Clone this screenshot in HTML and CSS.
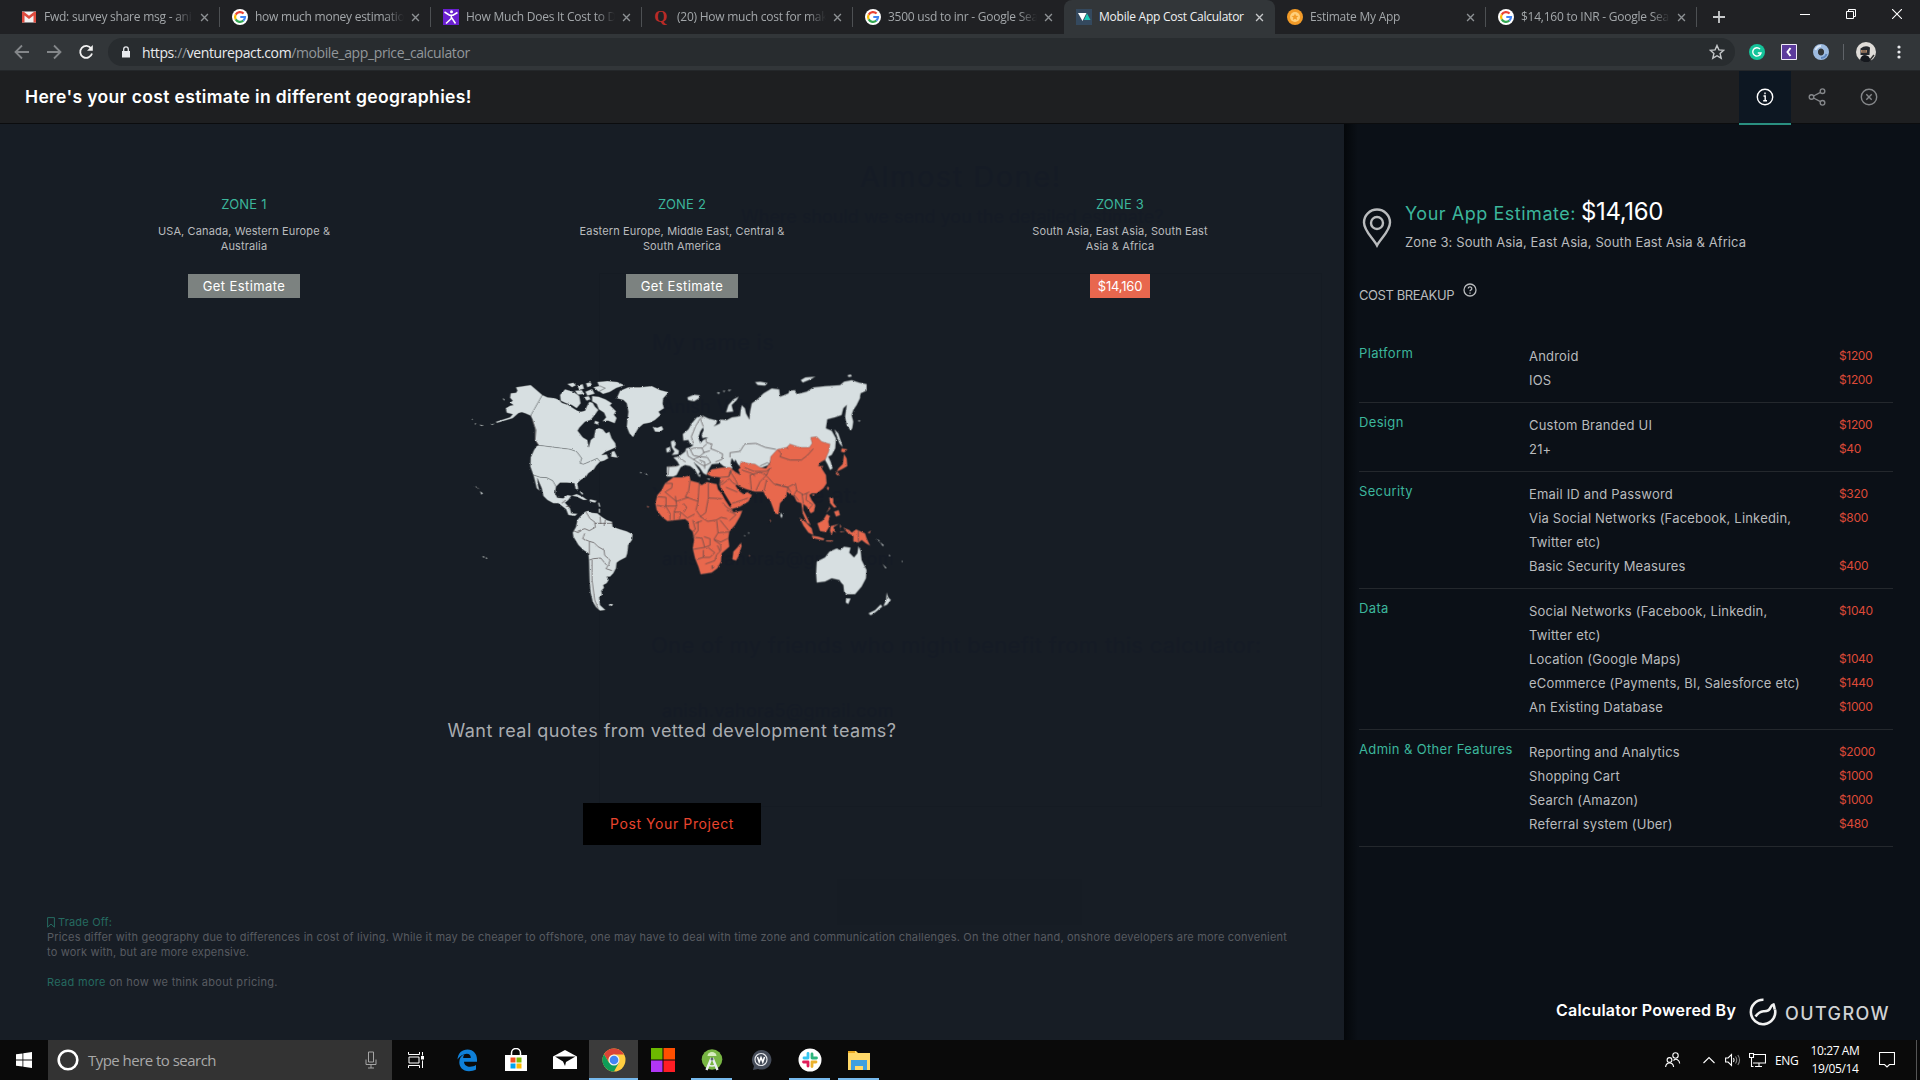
FILE: index.html
```
<!DOCTYPE html>
<html lang="en">
<head>
<meta charset="utf-8">
<title>Mobile App Cost Calculator</title>
<link rel="stylesheet" href="styles.css">
</head>
<body>
<svg class="defs" width="0" height="0">
  <defs>
    <symbol id="google" viewBox="0 0 16 16"><circle cx="8" cy="8" r="8" fill="#fff"/><g fill="none" stroke-width="2.2"><path d="M11.6 4.6A5 5 0 0 0 3.7 5.6" stroke="#ea4335"/><path d="M3.7 5.6a5 5 0 0 0 0 4.8" stroke="#fbbc05"/><path d="M3.7 10.4a5 5 0 0 0 7.6 1.3" stroke="#34a853"/><path d="M11.3 11.7A5 5 0 0 0 13 8H8.3" stroke="#4285f4"/></g></symbol>
    <symbol id="close" viewBox="0 0 10 10"><path d="M1.2 1.2l7.6 7.6M8.8 1.2L1.2 8.8" stroke="currentColor" stroke-width="1.5" fill="none"/></symbol>
  </defs>
</svg>

<div class="tabstrip">
  <div class="tab"><svg class="fav" viewBox="0 0 16 16"><path d="M1 2.5h14v11H1z" fill="#f2f2f2"/><path d="M1 3v10.500h2.500V6.500L8 10l4.500-3.500v7H15V3l-1.500-.6L8 6.700 2.500 2.400z" fill="#dd4b3e"/></svg><span class="tab-title">Fwd: survey share msg - ani</span><svg class="x"><use href="#close"/></svg></div>
  <div class="tab"><svg class="fav"><use href="#google"/></svg><span class="tab-title">how much money estimatio</span><svg class="x"><use href="#close"/></svg></div>
  <div class="tab"><svg class="fav" viewBox="0 0 16 16"><path d="M0 0h16v16H0z" fill="#6a1fd0"/><circle cx="8.500" cy="2.800" r="1.500" fill="#fff"/><path d="M1.500 3l5 3.200h3.500L14.500 3.500M8.300 6v3.500L3 14.500M8.500 8.500l4 6" stroke="#fff" stroke-width="1.500" fill="none"/></svg><span class="tab-title">How Much Does It Cost to D</span><svg class="x"><use href="#close"/></svg></div>
  <div class="tab"><span class="fav quora">Q</span><span class="tab-title">(20) How much cost for mak</span><svg class="x"><use href="#close"/></svg></div>
  <div class="tab last"><svg class="fav"><use href="#google"/></svg><span class="tab-title">3500 usd to inr - Google Sea</span><svg class="x"><use href="#close"/></svg></div>
  <div class="tab active"><svg class="fav" viewBox="0 0 16 16"><path d="M0 0h16v16H0z" fill="#34495e"/><path d="M2 4h8.500L6.500 12z" fill="#fff"/><path d="M11 4.500l3.500 6.500H8z" fill="#1cc8b5"/></svg><span class="tab-title">Mobile App Cost Calculator</span><svg class="x"><use href="#close"/></svg></div>
  <div class="tab"><svg class="fav" viewBox="0 0 16 16"><circle cx="8" cy="8" r="8" fill="#f29b28"/><circle cx="8" cy="8" r="5" fill="#ffd07c"/><path d="M8 4.500l1 2.300 2.500.2-1.900 1.600.6 2.400L8 9.700 5.800 11l.6-2.400L4.500 7 7 6.800z" fill="#f29b28"/></svg><span class="tab-title">Estimate My App</span><svg class="x"><use href="#close"/></svg></div>
  <div class="tab"><svg class="fav"><use href="#google"/></svg><span class="tab-title">$14,160 to INR - Google Sea</span><svg class="x"><use href="#close"/></svg></div>
  <svg class="plus" viewBox="0 0 12 12"><path d="M6 0v12M0 6h12" stroke="#c8cacc" stroke-width="1.800"/></svg>
  <div class="winctl">
    <svg viewBox="0 0 10 10"><path d="M0 5.500h10" stroke="#fff"/></svg>
    <svg viewBox="0 0 10 10"><path d="M.5 2.500h7v7h-7zM2.500 2.500v-2h7v7h-2" stroke="#fff" fill="none"/></svg>
    <svg viewBox="0 0 10 10"><path d="M0 0l10 10M10 0L0 10" stroke="#fff" stroke-width="1.100"/></svg>
  </div>
</div>

<div class="toolbar">
  <div class="nav">
    <svg viewBox="0 0 16 16" stroke="#84878a"><path d="M15 8H2M8 1.500L1.500 8 8 14.500"/></svg>
    <svg viewBox="0 0 16 16" stroke="#84878a"><path d="M1 8h13M8 1.500L14.500 8 8 14.500"/></svg>
    <svg viewBox="0 0 16 16" stroke="#f1f1f1"><path d="M13.200 4.500A6 6 0 1 0 14 9.500"/><path d="M14.800 1v5.800H9z" fill="#f1f1f1" stroke="none"/></svg>
  </div>
  <div class="omnibox">
    <svg class="lock" viewBox="0 0 10 12"><path d="M1 5h8v6.500H1z" fill="#e8eaed"/><path d="M2.700 5V3.200a2.300 2.300 0 0 1 4.600 0V5" fill="none" stroke="#e8eaed" stroke-width="1.300"/></svg>
    <span class="url">https<i>://</i>venturepact.com<i>/mobile_app_price_calculator</i></span>
    <svg class="star" viewBox="0 0 16 16"><path d="M8 1.500l1.900 4.400 4.800.4-3.600 3.200 1.100 4.700L8 11.700l-4.200 2.500 1.100-4.700L1.300 6.300l4.800-.4z" fill="none" stroke="#c4c7c9" stroke-width="1.400"/></svg>
  </div>
  <div class="exts">
    <svg viewBox="0 0 16 16"><circle cx="8" cy="8" r="8" fill="#15c39a"/><path d="M11 5A4.200 4.200 0 1 0 12 9H8.800" fill="none" stroke="#fff" stroke-width="1.400"/></svg>
    <svg viewBox="0 0 16 16"><path d="M.5.5h15v15H.5z" fill="#5c3b9c" stroke="#efeaf7"/><path d="M9.500 4L6.500 8l3 4" fill="none" stroke="#fff" stroke-width="2"/></svg>
    <svg viewBox="0 0 16 16"><circle cx="8" cy="8" r="5.500" fill="none" stroke="#9dbbe0" stroke-width="5"/><path d="M2.500 6a6 6 0 0 1 5.500-4" fill="none" stroke="#dae6f5" stroke-width="2"/><path d="M13.500 10a6 6 0 0 1-5.500 4" fill="none" stroke="#5e86bd" stroke-width="2"/><ellipse cx="8" cy="8" rx="2.600" ry="3.600" fill="#323639"/></svg>
  </div>
  <div class="divider"></div>
  <svg class="avatar" viewBox="0 0 20 20"><circle cx="10" cy="10" r="10" fill="#dfdcd8"/><path d="M4.500 6.500q5-4 9.500-1l-.5 7.500h-9z" fill="#24272c"/><path d="M5 8h6v2.500H5z" fill="#d9a37a"/><path d="M5.500 9h5" stroke="#333"/><path d="M4 18q1-5 5-5t6 6a10 10 0 0 1-11-1z" fill="#15181d"/><path d="M14 18l4-5" stroke="#333" stroke-width="1.500"/></svg>
  <svg class="dots" viewBox="0 0 4 14"><circle cx="2" cy="2" r="1.600"/><circle cx="2" cy="7" r="1.600"/><circle cx="2" cy="12" r="1.600"/></svg>
</div>

<header class="header">
  <h1>Here's your cost estimate in different geographies!</h1>
  <div class="hbtn on"><svg viewBox="0 0 18 18"><circle cx="9" cy="9" r="7.700"/><path d="M9 4.500v1.800M7.500 8H9.200v4.500M7.200 12.800h3.800"/></svg></div>
  <div class="hbtn"><svg viewBox="0 0 18 18"><circle cx="3.500" cy="9" r="2.300"/><circle cx="14.500" cy="3.200" r="2.300"/><circle cx="14.500" cy="14.800" r="2.300"/><path d="M5.500 8l7-3.700M5.500 10l7 3.700"/></svg></div>
  <div class="hbtn"><svg viewBox="0 0 18 18"><circle cx="9" cy="9" r="7.700"/><path d="M6.300 6.300l5.400 5.400M11.700 6.300l-5.400 5.400"/></svg></div>
</header>

<main class="main">
  <section class="left">
    <div class="ghost" aria-hidden="true">
      <span class="g g1">Almost Done!</span>
      <span class="g g2">Where should we send you the detailed estimate?</span>
      <span class="g g3">My name is</span>
      <span class="g g4">Anish Vahora</span>
      <span class="g g5">You can find me at:</span>
      <span class="g g6">anish.vahora5@gmail.com</span>
      <span class="g g7">One of my friends who might benefit from this calculator:</span>
      <span class="g g8">anish.vahora5@gmail.com</span>
      <span class="gbox"></span>
      <span class="gbtn"></span>
    </div>
    <div class="zones">
      <div class="zone"><h2>ZONE 1</h2><p>USA, Canada, Western Europe &amp;<br>Australia</p><span class="btn">Get Estimate</span></div>
      <div class="zone"><h2>ZONE 2</h2><p>Eastern Europe, Middle East, Central &amp;<br>South America</p><span class="btn">Get Estimate</span></div>
      <div class="zone"><h2>ZONE 3</h2><p>South Asia, East Asia, South East<br>Asia &amp; Africa</p><span class="btn price">$14,160</span></div>
    </div>

    <svg class="map" viewBox="-168 0 1608 810">
      <defs><filter id="coast" x="0" y="0" width="100%" height="100%"><feTurbulence type="fractalNoise" baseFrequency="0.16" numOctaves="2" seed="4"/><feDisplacementMap in="SourceGraphic" scale="6" xChannelSelector="R" yChannelSelector="G"/></filter></defs>
      <g filter="url(#coast)">
      <g class="land">
        <path d="M168 82L212 75 247 105 212 167 195 160 185 157 175 160 158 175 110 189 108 185 150 172 158 163 140 158 137 145 150 137 160 135 150 128 158 122 150 113 152 100 168 98 172 92Z"/>
        <path d="M247 105L262 112 285 115 298 120 305 128 325 135 340 145 352 152 362 155 375 152 380 140 388 125 398 128 405 140 415 150 408 160 400 170 392 180 375 185 358 203 353 212 368 232 382 240 386 262 392 240 402 232 406 210 416 204 428 208 438 220 448 215 455 235 466 250 468 262 450 270 436 276 425 285 440 283 445 295 432 302 420 305 412 295 396 302 370 313 360 310 365 295 350 275 330 268 236 256 225 240 226 210 218 180 212 167Z"/>
        <path d="M230 258L236 256 330 268 350 275 365 295 360 310 370 313 396 302 412 295 420 305 408 318 402 328 385 340 378 350 362 360 352 370 355 388 347 388 343 370 320 368 300 368 288 380 278 362 260 353 240 352 220 345 211 320 212 292 222 270Z"/>
        <path d="M220 345L240 352 260 353 278 362 288 380 285 400 292 413 310 415 322 405 334 407 325 420 315 428 330 445 334 460 352 461 345 468 325 465 318 448 295 430 280 430 262 420 250 408 245 385 232 355 234 375 238 392 230 385 224 360Z"/>
        <path d="M335 407L350 402 368 410 382 420 370 420 350 410ZM390 418L410 422 405 428 388 424ZM362 392l8 10-4 2-6-8zM455 275l8-2 10 20-20-3zM414 428l4 0 3 12-4 0zM416 446l4 0 0 12-4 0z"/>
        <path d="M375 455L385 452 395 458 412 460 425 470 440 480 456 485 458 500 480 508 500 514 518 523 516 540 505 555 502 580 498 592 478 602 470 608 468 625 460 640 450 650 440 650 446 660 440 670 430 675 432 684 424 692 426 705 418 712 420 735 436 750 420 752 408 742 398 725 392 700 389 670 388 640 387 605 385 580 370 570 355 555 340 530 338 518 348 500 352 480 360 470Z"/>
        <path d="M480 92L505 82 540 82 575 78 600 90 626 97 610 115 608 130 612 145 596 155 602 165 585 180 570 188 550 192 535 205 526 220 519 232 508 220 500 200 502 180 505 155 500 130 490 120 470 115Z"/>
        <path d="M578 200L592 203 605 198 610 208 600 216 585 215Z"/>
        <path d="M300 105L315 88 340 95 358 108 362 130 350 145 335 135 318 130 302 122ZM322 72l18-4 8 8-12 6zM352 78l16-6 4 14-14 4zM378 70l14-3 4 10-14 5zM345 92l20-2 8 12-20 2zM376 95l20-8 8 14-22 6zM400 82l20-5 16 8-20 10zM412 66l30-3 30 3 22 10-25 8-20 12-20 6-12-8 18-10-18-6zM372 112l14-4 6 10-12 4zM396 108l20 2 20 8 20 12-6 6 18 18-6 10 8 10-6 16-20-8-16 2 10-12-6-14-16-10-6-16-14-8zM405 182l12 4-4 8-10-4z"/>
        <path d="M447 732l12 0-3 6-8 0zM128 115l6 3-2 4zM35 176l4 2-3 2zM44 190l5 1-4 3zM58 194l14 2-8 2zM92 193l12-2-8 4zM46 378l12 9-10-5zM60 394l9 6-5 4zM67 588l8 3-5 2zM77 592l6 3-5 2zM541 335l5 4-5 1zM554 338l10 8-6-2z"/>
        <g transform="translate(540 0)">
        <path d="M128 222L145 208 155 190 170 172 188 167 205 175 232 182 228 192 222 198 240 190 240 178 260 180 275 172 300 168 302 150 305 135 315 145 318 160 328 178 330 155 335 130 352 118 370 100 395 85 418 88 420 110 445 100 448 92 465 90 470 102 500 95 520 82 555 78 600 75 612 65 635 60 658 68 680 72 680 92 662 100 660 115 650 135 640 150 635 165 640 185 637 205 632 212 620 195 615 170 620 135 610 145 605 165 585 172 562 178 558 205 575 212 588 235 586 265 575 285 565 290 572 305 578 325 570 330 562 312 555 300 560 275 500 270 400 290 385 315 360 325 303 320 290 315 275 295 272 310 278 326 260 323 250 318 240 310 215 313 205 330 200 345 190 340 178 322 162 308 180 335 174 346 165 330 150 318 135 315 122 322 110 345 100 350 80 350 80 320 105 318 118 316 112 305 100 292 115 290 135 275 138 265 150 262 160 255 150 252 145 240 130 242Z"/>
        <path d="M92 245L102 240 108 252 103 262 117 272 115 283 95 285 103 275 95 262ZM78 265l12-5 2 14-12 4z"/>
        <path d="M258 157L265 135 280 118 296 110 290 120 275 135 280 155ZM142 112l20-8 18 2-4 10-14 8-18-4zM230 97l10 0-4 5zM248 93l8-1-4 4zM262 90l12-1-6 4zM345 66l16-1 22 4-8 8-22-2zM482 60l14-8 30-2-14 8-24 10zM622 46l10-3 4 6-10 2zM653 181l10 1-6 3z"/>
        <path d="M583 208L595 220 605 250 608 262 598 250ZM422 458l6 8-3 8-4-5zM172 345l10-2-2 8zM200 356l10 0-2 4z"/>
        <path d="M530 605L555 592 568 575 590 565 600 570 612 560 632 563 628 578 642 592 652 580 655 558 662 572 665 600 680 630 678 655 665 680 645 703 620 703 612 695 610 675 603 668 598 660 575 655 555 665 530 668 528 640Z"/>
        <path d="M618 715L632 715 625 732 617 728ZM740 698L745 712 753 720 740 735 730 738 738 720ZM722 733L727 740 705 758 692 766 685 760 705 750ZM710 538l10 4-4 2zM720 546l12 10-4 2zM748 583l3 6-4 0zM728 612l12 12-4 1zM785 602l4 3-4 1zM325 516l4 4-4 1zM313 525l4 3-4 1z"/>
        </g>
      </g>
      <g class="hot" transform="translate(540 0)">
        <path d="M100 352L125 352 148 347 152 362 175 368 185 375 200 366 230 372 234 388 258 415 272 440 280 457 307 452 300 470 285 495 268 515 265 535 268 560 245 580 243 605 232 625 215 638 182 643 175 620 165 595 158 565 162 540 158 515 148 505 145 485 135 477 110 480 82 483 65 470 50 450 46 430 52 405 65 390 75 370Z"/>
        <path d="M303 548L305 558 295 590 288 602 277 598 280 575 292 562Z"/>
        <path d="M200 342L215 328 245 323 270 322 285 335 302 345 295 330 303 305 325 310 345 312 360 322 378 325 390 308 392 290 412 268 440 262 450 252 480 262 508 262 516 250 512 232 530 230 545 245 570 252 566 275 555 300 540 308 535 318 550 318 545 325 558 345 560 370 550 385 530 400 515 400 508 405 515 420 526 435 522 455 512 460 500 440 490 432 490 450 505 480 512 495 500 488 488 460 484 430 470 425 462 408 450 402 440 395 440 408 420 430 415 463 405 460 390 420 378 410 370 395 345 395 320 388 305 382 288 375 298 393 310 402 322 396 336 405 325 425 300 440 275 447 262 420 248 398 238 375 240 352 215 350Z"/>
        <path d="M605 265L622 268 612 278 603 275ZM612 282L620 295 622 318 605 328 590 335 595 325 608 312ZM590 335l8 8-5 4-6-6zM562 380l5 2-2 9-4-4zM516 403l8 0-4 6z"/>
        <path d="M568 412l12 2 0 15 10 12-8 2-12-14zM582 455l14-5 4 15-12 5zM568 440l3 6-12 12 8-12z"/>
        <path d="M478 472L495 485 515 505 520 525 505 518 490 497ZM515 527L535 530 553 536 550 541 518 534ZM532 490L548 482 560 462 570 468 565 485 568 500 558 516 540 513ZM572 498L595 492 580 502 588 518 580 512 575 525 570 512ZM558 541l22 0-4 4-18-1zM600 492l4 8-4 4zM600 514l14 0-12 3z"/>
        <path d="M610 503L628 510 635 518 648 508 675 520 680 535 690 557 678 550 665 540 655 548 640 545 640 528 622 518ZM683 518l10-6-4 8zM20 438l8 2-5 3zM390 478l3 4-3 6zM327 585l4 2-3 3z"/>
      </g>
      <g class="borders">
        <path d="M352 514l22-8 14 6 18-10-2-16-14-10-12-20M404 490l54 0M420 470l2 22M436 480l-4 18M374 520l-6 16 20 8 14 4 12 12 18 10 2 16 16 14-4 14-8 12 18 6M388 600l12-4 22-2 18 22M388 545l0 40M396 600l0 60 8 60 10 26M340 512l14 6 10-6"/>
        <path d="M236 256L225 240 228 210 216 180M305 430l12-10M318 440l14-2"/>
        <g transform="translate(540 0)">
        <path d="M270 292l0-14 30-4 14-22 34-2 28 12 32 6M160 250l-6-20 12-30 14-24 12-6M182 178l8 22M196 232l4 16 16 4-4 14 16 6 20 10-2 16-20 8M150 268l12-4 24 0 6 14-14 12-18-4zM140 270l4 18 16 10M186 264l14-12M160 298l18-8 24 2 10 16-20 10-14-8zM190 278l20-6M178 300l16 6 0 20M115 292l22 14M86 322l-2 26M112 318l-30 2M360 318l22-10 8 6"/>
        <path d="M75 370l22 0-2 14-20 12 34 28 36-12M150 362l-4 30-10 18 38 14 4-60M205 370l0 44 40 2M174 424l-6 26 14 20M205 414l-8 44-16 12 22 14 26-4 14-8 18 4M52 410l26 2 0 26M78 438l32 0-4-30M110 438l-8 18 20 0M50 436l28 4 12 20 0 20M102 458l0 22M122 456l20 18 22-12M130 430l10 12-8 14M122 458l-4 20M158 480l8 28-10 8M166 490l20-8M174 484l0 28-14 18M160 532l26 2 8 28-36 6M194 562l16-6 0-20-18-6M230 482l4 36-12 20 20 8 20-10M234 518l32-2M240 480l26 32M260 450l28 14-20 18M190 570l0 22-20 6M190 592l20 0 14-14-20-16M232 556l8 18-10 10-6 18-28 10M216 616l6 6-6 4zM222 540l20 14 0 18M248 428l12 14 22 14"/>
        <path d="M240 352l26-2 10-20M240 352l0 26 28-22 10 12 14 8M270 334l16 24 8 18M266 350l6-22M250 360l-8 10M258 382l34 14M276 430l32-10 16-6M330 345l30-8 20 8-20 20-12 26M330 345l4 44M305 330l30 10 10 8M312 322l30 12 36 0 16-10M380 345l8-20M380 358l-8 34M380 348l22 24 40 10 24-12M408 372l36 10-2 12M445 384l8 14M466 370l4 20-8 14 14 18M470 392l20 12 18-8M486 402l4 28M500 400l-2 20 20 14-12 14M414 270l10 10-4 10 30 10 34 0 18-14 18-20M540 308l14-8M655 512l0 34M440 262l4 4"/>
        </g>
      </g>
      <path class="sea" d="M715 232l6-18 8-12 2 8-6 14 2 10 18-2-16 8-8 10zM778 386l6-2 30 50-4 8-16-24zM826 376l8 0 8 10-8 2zM826 298l6 12 10 14-10 4-10-18z"/>
      </g>
    </svg>

    <p class="quotes">Want real quotes from vetted development teams?</p>
    <span class="post">Post Your Project</span>

    <div class="trade">
      <p class="teal"><svg viewBox="0 0 8 11"><path d="M.6.600h6.800v9.600L4 7 .600 10.200z" fill="none" stroke="currentColor"/></svg>Trade Off:</p>
      <p>Prices differ with geography due to differences in cost of living. While it may be cheaper to offshore, one may have to deal with time zone and communication challenges. On the other hand, onshore developers are more convenient<br>to work with, but are more expensive.</p>
      <p class="more"><a>Read more</a> on how we think about pricing.</p>
    </div>
  </section>

  <aside class="right">
    <div class="est">
      <svg class="pin" viewBox="0 0 30 40"><path d="M15 37.500C11 30 2 23 2 14.500a13 13 0 0 1 26 0C28 23 19 30 15 37.500z"/><circle cx="15" cy="15" r="6"/></svg>
      <div>
        <div class="est-title"><span>Your App Estimate:</span><b>$14,160</b></div>
        <div class="est-sub">Zone 3: South Asia, East Asia, South East Asia &amp; Africa</div>
      </div>
    </div>
    <div class="cb"><span>COST BREAKUP</span><svg viewBox="0 0 14 14"><circle cx="7" cy="7" r="6" fill="none" stroke="currentColor" stroke-width="1.300"/><path d="M5.200 5.600a1.800 1.700 0 1 1 2.600 1.500q-.8.500-.8 1.200M7 9.500v1.200" fill="none" stroke="currentColor" stroke-width="1.300"/></svg></div>
    <div class="rows">
      <div class="grp"><h3>Platform</h3><ul>
        <li>Android<em>$1200</em></li><li>IOS<em>$1200</em></li></ul></div>
      <div class="grp"><h3>Design</h3><ul>
        <li>Custom Branded UI<em>$1200</em></li><li>21+<em>$40</em></li></ul></div>
      <div class="grp"><h3>Security</h3><ul>
        <li>Email ID and Password<em>$320</em></li><li>Via Social Networks (Facebook, Linkedin,<br>Twitter etc)<em>$800</em></li><li>Basic Security Measures<em>$400</em></li></ul></div>
      <div class="grp"><h3>Data</h3><ul>
        <li>Social Networks (Facebook, Linkedin,<br>Twitter etc)<em>$1040</em></li><li>Location (Google Maps)<em>$1040</em></li><li>eCommerce (Payments, BI, Salesforce etc)<em>$1440</em></li><li>An Existing Database<em>$1000</em></li></ul></div>
      <div class="grp"><h3>Admin &amp; Other Features</h3><ul>
        <li>Reporting and Analytics<em>$2000</em></li><li>Shopping Cart<em>$1000</em></li><li>Search (Amazon)<em>$1000</em></li><li>Referral system (Uber)<em>$480</em></li></ul></div>
    </div>
    <div class="powered">
      <span class="pw">Calculator Powered By</span>
      <svg viewBox="0 0 28 28"><path d="M14.500 1.800A12.200 12.200 0 1 0 26 11.500"/><path d="M6.500 18.500q3.500-5 8-5.300 5.500.3 7-3.700 1.200-2.500 3-3 .8 2 1.200 5"/></svg>
      <span class="og">OUTGROW</span>
    </div>
  </aside>
</main>

<footer class="taskbar">
  <div class="start"><svg viewBox="0 0 16 16"><path d="M0 2.300l6.500-.9v6.200H0zM7.300 1.300L16 0v7.600H7.300zM0 8.400h6.500v6.200L0 13.700zM7.300 8.400H16V16l-8.700-1.300z" fill="#fff"/></svg></div>
  <div class="search">
    <svg class="ring" viewBox="0 0 22 22"><circle cx="11" cy="11" r="9.300" fill="none" stroke="#fff" stroke-width="2.600"/></svg>
    <span>Type here to search</span>
    <svg class="mic" viewBox="0 0 12 18"><path d="M3.500 1h5v10h-5zM1 8.500v5h10v-5M6 13.500V17M3 17h6" fill="none" stroke="#a5a5a5"/></svg>
  </div>
  <div class="apps">
    <div class="app"><svg class="i16" viewBox="0 0 16 16"><path d="M1 5h10v6H1zM.5 0v2.500h11V0M.5 16v-2.500h11V16M14.500 0v3.500M14.500 8.500V16" fill="none" stroke="#fff"/><path d="M13 4h3v3.500h-3z" fill="#fff"/></svg></div>
    <div class="app"><svg viewBox="0 0 24 24"><path d="M2.500 11.500C3 5 7 1.500 12.500 1.500c6 0 9.500 4.500 9.500 10v2.300H9c.2 3.600 3 5 6 5 2.400 0 4.500-.7 6-1.700v4.400c-2 1.200-4.300 1.700-7 1.700-6.500 0-9.700-4.500-9.700-9 0-4 2-6.500 5.200-8-1 1.200-1.200 2.500-1.300 3.800h7.600c0-3-1.500-4.300-4-4.300-4 0-7 2.500-9.300 5.800z" fill="#0f80d8"/></svg></div>
    <div class="app"><svg viewBox="0 0 24 24"><path d="M1 7h22v16H1z" fill="#fff"/><path d="M7.500 7V5a4.500 4.500 0 0 1 9 0v2" fill="none" stroke="#fff" stroke-width="1.500"/><path d="M6.500 9.500h5v5h-5z" fill="#f25022"/><path d="M12.500 9.500h5v5h-5z" fill="#7fba00"/><path d="M6.500 15.500h5v5h-5z" fill="#00a4ef"/><path d="M12.500 15.500h5v5h-5z" fill="#ffb900"/></svg></div>
    <div class="app"><svg viewBox="0 0 24 24"><path d="M0 8.500L12 2l12 6.500V21H0z" fill="#fff"/><path d="M2 8.500h20.500L13 14l-1 4-2-4.500z" fill="#0a0a0a"/></svg></div>
    <div class="app chrome run"><svg viewBox="0 0 24 24"><circle cx="12" cy="12" r="11.500" fill="#ffcd40"/><path d="M2 6.200A11.500 11.500 0 0 1 22 6.500H12A5.500 5.500 0 0 0 7 14.700z" fill="#db4437"/><path d="M2 6.200A11.500 11.500 0 0 0 12 23.500l4.800-8.700-5-2-4.800 2z" fill="#0f9d58"/><circle cx="12" cy="12" r="5.500" fill="#f1f1f1"/><circle cx="12" cy="12" r="4.300" fill="#4285f4"/></svg></div>
    <div class="app"><svg viewBox="0 0 24 24"><path d="M0 0h11.500v11.500H0z" fill="#6cb800"/><path d="M12.500 0H24v11.500H12.500z" fill="#ff4f00"/><path d="M0 12.500h11.500V24H0z" fill="#b136f5"/><path d="M12.500 12.500H24V24H12.500z" fill="#ff1d25"/></svg></div>
    <div class="app run s"><svg viewBox="0 0 24 24"><circle cx="12" cy="11.500" r="10.300" fill="#78b543"/><path d="M7.500 8a4.500 4 0 0 1 9 0z" fill="#d7ecc0"/><path d="M11.500 10L6.500 22M12.500 10l5 12" stroke="#e9eef0" stroke-width="2.400" fill="none"/><path d="M8.500 17q3.500 2 7 0" stroke="#e9eef0" stroke-width="1.500" fill="none"/><circle cx="12" cy="11" r="1.500" fill="#5a6670"/></svg></div>
    <div class="app"><svg viewBox="0 0 24 24"><path d="M12 2a10 9.800 0 1 1-3 19l-5 1 1-4a10 10 0 0 1 7-16z" fill="#454c59"/><circle cx="12" cy="11.500" r="6" fill="none" stroke="#e6e8ec" stroke-width="1.200"/><path d="M8.500 9l1.700 5 1.800-4.500 1.800 4.500 1.700-5" fill="none" stroke="#fff" stroke-width="1.500"/></svg></div>
    <div class="app run s"><svg viewBox="0 0 24 24"><circle cx="12" cy="12" r="11.500" fill="#fff"/><g stroke-width="2.800" stroke-linecap="round"><path d="M10 5.500v4.500M6 10h4" stroke="#36c5f0"/><path d="M14 6v4M14 10h4.500" stroke="#2eb67d"/><path d="M14 14v4.500M14 14h4" stroke="#ecb22e"/><path d="M10 14v4M5.500 14H10" stroke="#e01e5a"/></g></svg></div>
    <div class="app run s"><svg viewBox="0 0 24 24"><path d="M1 3h8l2 2h12v17H1z" fill="#ffd869"/><path d="M1 3h7v2H1z" fill="#e9a820"/><path d="M4 12h16v10h-4v-4H8v4H4z" fill="#3d9fe0"/></svg></div>
  </div>
  <div class="tray">
    <svg class="people" viewBox="0 0 16 16"><circle cx="10.500" cy="3.500" r="2.700"/><circle cx="4.500" cy="8" r="2.400"/><path d="M.6 15q.4-4 4-4t4 4M8.500 8.500q2-2 4-.8t2.200 3.800"/></svg>
    <svg class="caret" viewBox="0 0 12 8"><path d="M.5 7L6 1.500 11.500 7"/></svg>
    <svg class="vol" viewBox="0 0 16 14"><path d="M.6 5h2.500L6.500 1.500v11L3.100 9H.6zM8.500 5q1.200 2 0 4"/><path d="M10.500 3.500q2.500 3.500 0 7M12.800 2q3.500 5 0 10" opacity=".5"/></svg>
    <svg class="net" viewBox="0 0 17 14"><path d="M4 1.500h12.500v8.500H4M10 10v3.500M6 13.500h7M.5.500h4v4h-4zM2.500 4.500v9h2"/></svg>
    <span class="eng">ENG</span>
    <div class="clock"><span>10:27 AM</span><span>19/05/14</span></div>
    <svg class="act" viewBox="0 0 16 16"><path d="M.5.500h15v12h-5L8 15l-2.500-2.500h-5z"/></svg>
    <div class="peek"></div>
  </div>
</footer>
</body>
</html>
```
FILE: styles.css
```
* { box-sizing: border-box; margin: 0; padding: 0; }
body {
  width: 1920px; height: 1080px; overflow: hidden;
  display: flex; flex-direction: column;
  background: #171d25; color: #b9bbbd;
  font-family: Inter, "Open Sans", sans-serif;
}
svg { display: block; flex: none; }
.defs { position: absolute; }
h1, h2, h3, em, i { font-weight: 400; font-style: normal; }
ul { list-style: none; }

/* browser chrome */
.tabstrip { height: 34px; background: #202124; display: flex; align-items: center; padding-left: 9px; font: 12px "Open Sans", sans-serif; letter-spacing: -.24px; color: #a3a7aa; flex: none; }
.tab { width: 211px; height: 34px; display: flex; align-items: center; padding-left: 12px; position: relative; flex: none; }
.tab::after { content: ""; position: absolute; right: 0; top: 7px; width: 1px; height: 20px; background: #4d5053; }
.tab.last::after, .tab.active::after { display: none; }
.tab.active { background: #323639; border-radius: 8px 8px 0 0; color: #f0f1f2; }
.tab.active .tab-title { -webkit-mask-image: none; mask-image: none; }
.fav { width: 16px; height: 16px; flex: none; }
.quora { color: #b92b27; font: bold 17px/15px "Liberation Serif", serif; }
.tab-title { margin-left: 7px; width: 151px; line-height: 16px; margin-top: -1px; overflow: hidden; white-space: nowrap; -webkit-mask-image: linear-gradient(90deg, #000 130px, transparent 149px); mask-image: linear-gradient(90deg, #000 130px, transparent 149px); }
.x { width: 9px; height: 9px; margin-left: 5px; color: #8d9194; }
.active .x { color: #c5c7c9; }
.plus { width: 12px; height: 12px; margin-left: 16px; }
.winctl { margin-left: auto; display: flex; gap: 36px; padding-right: 18px; margin-top: -6px; }
.winctl svg { width: 10px; height: 10px; }
.toolbar { height: 37px; background: #323639; border-bottom: 1px solid #24272a; display: flex; align-items: center; padding: 0 19px 0 14px; flex: none; }
.nav { display: flex; gap: 16px; }
.nav svg { width: 16px; height: 16px; fill: none; stroke-width: 1.8; }
.omnibox { width: 1627px; height: 28px; border-radius: 14px; margin-left: 14px; background: #282c2f; display: flex; align-items: center; padding: 0 10px 0 13px; }
.lock { width: 10px; height: 12px; }
.url { margin-left: 11px; font: 14px "Open Sans", sans-serif; letter-spacing: -.39px; color: #e8eaed; }
.url i { color: #92979b; }
.star { width: 16px; height: 16px; margin-left: auto; }
.exts { display: flex; gap: 16px; margin-left: 14px; }
.exts svg { width: 16px; height: 16px; }
.divider { width: 1px; height: 16px; background: #5f6368; margin: 0 12px 0 14px; }
.avatar { width: 20px; height: 20px; }
.dots { width: 4px; height: 14px; fill: #e8eaed; margin-left: auto; }

/* page header */
.header { height: 53px; background: #1e1f21; border-bottom: 1px solid #0b0c0e; display: flex; align-items: stretch; padding: 0 25px; flex: none; }
.header h1 { font-size: 17.5px; font-weight: 600; line-height: 51px; letter-spacing: .36px; color: #fff; margin-right: auto; }
.hbtn { width: 52px; display: flex; align-items: center; justify-content: center; color: #85878a; }
.hbtn svg { width: 18px; height: 18px; fill: none; stroke: currentColor; stroke-width: 1.4; }
.hbtn.on { background: #0d1722; color: #fff; border-bottom: 2px solid #2a8f80; margin-bottom: -2px; position: relative; z-index: 1; }

.main { height: 916px; display: flex; flex: none; }
.left { width: 1344px; background: #171d25; position: relative; display: flex; flex-direction: column; align-items: center; padding-top: 71px; }
.zones { width: 1314px; margin-left: 20px; display: grid; grid-template-columns: repeat(3, 1fr); position: relative; }
.zone { text-align: center; display: flex; flex-direction: column; align-items: center; }
.zone h2 { font-size: 13px; line-height: 18px; letter-spacing: .2px; color: #3cb69c; }
.zone p { font-size: 11px; line-height: 15px; letter-spacing: .13px; margin-top: 11px; }
.btn { margin-top: 20px; width: 112px; height: 24px; line-height: 24px; background: #7c8280; color: #fff; font-size: 13px; letter-spacing: .4px; }
.btn.price { background: #e8674e; width: 60px; letter-spacing: -.2px; }
.map { width: 536px; height: 270px; margin-top: 62px; position: relative; }
.land { fill: #d7dfe1; }
.hot { fill: #e8674e; }
.land path, .hot path { stroke: #4d4f52; stroke-opacity: .6; stroke-width: 1.5; }
.borders { fill: none; stroke: #50484a; stroke-width: 2; }
.sea { fill: #171d25; }
.quotes { margin-top: 88px; font-size: 18px; line-height: 26px; letter-spacing: .455px; color: #a9acb0; position: relative; }
.post { margin-top: 59px; width: 178px; height: 42px; line-height: 42px; text-align: center; background: #000; color: #e8442e; font-size: 14px; letter-spacing: .59px; position: relative; }
.trade { align-self: stretch; margin-top: 70px; padding-left: 47px; font-size: 11px; line-height: 15px; letter-spacing: .187px; color: #575b61; white-space: nowrap; }
.trade .teal, .trade a { color: #256a60; }
.teal svg { display: inline-block; width: 8px; height: 11px; margin-right: 3px; vertical-align: -2px; }
.more { margin-top: 15px; letter-spacing: .3px; }

/* previous step, almost faded out beneath the results */
.ghost { position: absolute; inset: 0; color: #151b25; white-space: nowrap; }
.g { position: absolute; line-height: 30px; font-size: 18px; letter-spacing: .3px; }
.g1 { left: 860px; top: 38px; font-size: 29px; letter-spacing: 1.5px; }
.g2 { left: 741px; top: 78px; letter-spacing: 0; }
.g3 { left: 652px; top: 203px; font-size: 22px; }
.g4 { left: 662px; top: 268px; }
.g5 { left: 652px; top: 356px; font-size: 22px; }
.g6 { left: 662px; top: 420px; }
.g7 { left: 651px; top: 506px; font-size: 22px; }
.g8 { left: 662px; top: 572px; }
.gbox { position: absolute; left: 599px; top: 149px; width: 723px; height: 534px; border: 1px solid #151b23; }
.gbtn { position: absolute; left: 837px; top: 755px; width: 245px; height: 46px; background: #161c24; }

.right { width: 576px; background: linear-gradient(90deg, #04070a 0, #0b1017 14px); padding: 74px 27px 0 15px; display: flex; flex-direction: column; }
.est { display: flex; padding-left: 3px; height: 60px; }
.pin { width: 30px; height: 40px; margin-top: 10px; fill: none; stroke: #b9bbbd; stroke-width: 2.4; }
.est > div { margin-left: 13px; }
.est-title { display: flex; align-items: baseline; height: 30px; font-size: 18px; line-height: 28px; letter-spacing: .53px; color: #3cb69c; }
.est-title b { font-weight: 400; font-size: 24px; letter-spacing: -.35px; color: #fff; margin-left: 5px; }
.est-sub { font-size: 13px; line-height: 18px; letter-spacing: .11px; margin-top: 5px; }
.cb { display: flex; margin-top: 25px; height: 24px; font-size: 13px; line-height: 24px; letter-spacing: -.43px; }
.cb svg { width: 14px; height: 14px; margin-left: 9px; }
.rows { margin-top: 26px; }
.grp { display: flex; border-bottom: 1px solid #24282d; padding: 9px 0 11px; }
.grp:first-child { padding-top: 10px; }
.grp h3 { width: 170px; font-size: 13px; line-height: 20px; letter-spacing: .35px; color: #3cb69c; white-space: nowrap; }
.grp ul { flex: 1; padding-top: 1px; margin-bottom: -1px; }
.grp li { font-size: 13px; line-height: 24px; letter-spacing: .2px; position: relative; white-space: nowrap; }
.grp em { position: absolute; left: 310px; top: 0; font-size: 12px; letter-spacing: -.35px; color: #dd4a38; }
.powered { margin-top: auto; height: 42px; display: flex; align-items: flex-start; justify-content: flex-end; padding-right: 4px; color: #fff; }
.pw { font-size: 16px; font-weight: 600; line-height: 24px; letter-spacing: .24px; }
.powered svg { width: 28px; height: 28px; margin: 0 8px 0 13px; fill: none; stroke: #f1f1f1; stroke-width: 2.6; }
.og { font-size: 18px; font-weight: 500; line-height: 31px; letter-spacing: 1.4px; margin-right: -1px; color: #d0d2d4; }

/* desktop taskbar */
.taskbar { height: 40px; background: #0a0a0a; display: flex; flex: none; font-family: "Open Sans", sans-serif; color: #fff; }
.start { width: 48px; display: grid; place-items: center; }
.start svg { width: 16px; height: 16px; }
.search { width: 344px; background: #333; display: flex; align-items: center; padding: 0 15px 0 9px; font-size: 15px; letter-spacing: -.53px; color: #a9a9a9; }
.ring { width: 22px; height: 22px; margin-right: 9px; }
.mic { width: 12px; height: 18px; margin-left: auto; }
.apps { display: flex; }
.app { width: 49px; height: 40px; display: grid; place-items: center; position: relative; }
.app:first-child { width: 48px; margin-right: 2px; }
.app svg { width: 24px; height: 24px; }
.app svg.i16 { width: 16px; height: 16px; }
.run::after { content: ""; position: absolute; left: 0; right: 0; bottom: 0; height: 2px; background: #76b9ed; }
.run.s::after { left: 4px; right: 4px; }
.chrome { background: #3b3b3b; }
.tray { margin-left: auto; display: flex; align-items: center; }
.tray svg { fill: none; stroke: #fff; stroke-width: 1.1; }
.people { width: 16px; height: 16px; margin-right: 22px; }
.caret { width: 12px; height: 8px; margin-right: 10px; }
.vol { width: 16px; height: 14px; margin-right: 8px; }
.net { width: 17px; height: 14px; margin-right: 9px; }
.eng { font-size: 12px; width: 24px; letter-spacing: -.3px; }
.clock { width: 80px; padding-right: 8px; font-size: 12px; line-height: 18px; letter-spacing: -.39px; display: flex; flex-direction: column; align-items: center; }
.act { width: 16px; height: 16px; }
.peek { width: 1px; height: 40px; background: #555; margin: 0 3px 0 21px; }
```
